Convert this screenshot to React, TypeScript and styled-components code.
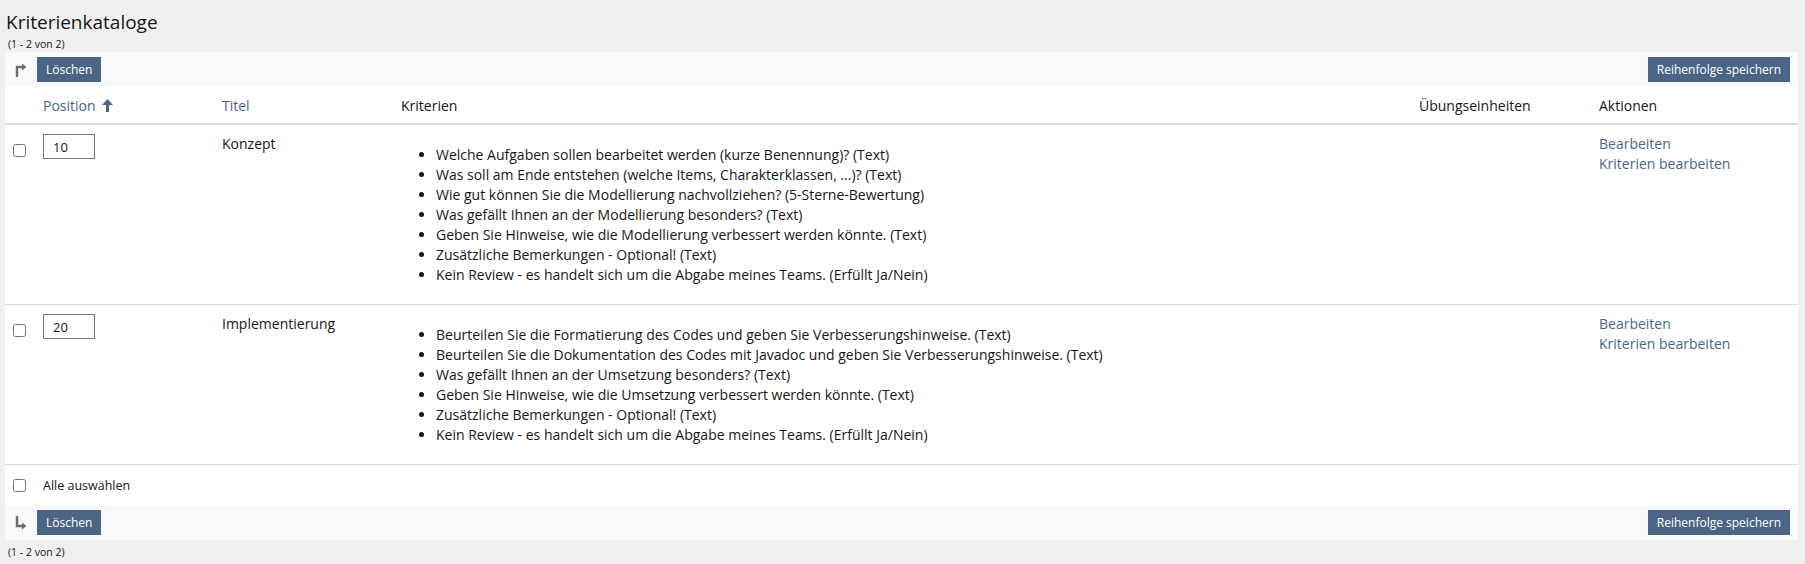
import styled, { createGlobalStyle } from 'styled-components';

const GlobalStyle = createGlobalStyle`
  body {
    margin: 0;
    background: #f0f0f0;
    font-family: "Open Sans", "Noto Sans", sans-serif;
    color: #161616;
  }
`;

const Page = styled.div`
  padding: 0 7px 0 5px;
`;

const Title = styled.h1`
  margin: 10px 0 0 1px;
  font-size: 19px;
  line-height: 24px;
  font-weight: 400;
  color: #161616;
`;

const Count = styled.div`
  font-size: 10.5px;
  line-height: 12px;
  padding: 4px 0 2px 3px;
  color: #161616;
`;

const Toolbar = styled.div`
  height: 35px;
  background: #f9f9f9;
  display: flex;
  align-items: center;
  justify-content: space-between;
  padding: 0 8px 0 9px;
`;

const ToolGroup = styled.div`
  display: flex;
  align-items: center;
  gap: 9px;
`;

const Button = styled.button`
  height: 25px;
  padding: 0 9px;
  border: none;
  background: #4c6586;
  color: #fff;
  font-family: inherit;
  font-size: 12px;
  cursor: pointer;
`;

const Panel = styled.div`
  background: #fff;
`;

const Table = styled.table`
  width: 100%;
  border-collapse: collapse;
  table-layout: fixed;
  font-size: 14px;
`;

const HeadCell = styled.th`
  height: 36px;
  padding: 0 8px;
  text-align: left;
  font-weight: 400;
  vertical-align: middle;
  border-bottom: 2px solid #dddddd;
  color: #161616;
`;

const SortLink = styled.a`
  color: #4c6586;
  text-decoration: none;
  display: inline-flex;
  align-items: center;
  gap: 6px;
`;

const Row = styled.tr`
  border-bottom: 1px solid #dddddd;
`;

const Cell = styled.td`
  padding: 9px 8px;
  vertical-align: top;
  line-height: 20px;
`;

const Check = styled.input.attrs({ type: 'checkbox' })<{ $top?: number }>`
  display: block;
  width: 13px;
  height: 13px;
  margin: ${(p) => p.$top ?? 10}px 0 0 0;
`;

const PosInput = styled.input`
  box-sizing: border-box;
  width: 52px;
  height: 25px;
  border: 1px solid #757575;
  padding: 0 9px;
  font-family: inherit;
  font-size: 13px;
  color: #161616;
  display: block;
`;

const List = styled.ul`
  margin: 11px 0 10px 0;
  padding-left: 35px;
`;

const ActionLink = styled.a`
  display: block;
  color: #4c6586;
  text-decoration: none;
`;

const SelectAll = styled.div`
  height: 40px;
  display: flex;
  align-items: center;
  padding-left: 8px;
  gap: 17px;
  font-size: 12.5px;
`;

const BottomCount = styled(Count)`
  padding: 6px 0 0 3px;
`;

const ArrowIcon = ({ down }: { down?: boolean }) => (
  <svg width="14" height="14" viewBox="0 0 14 14">
    {down ? (
      <>
        <path d="M3 0 V10 H8" stroke="#6f6f6f" strokeWidth="2.4" fill="none" />
        <polygon points="8,6.5 12.5,10 8,13.5" fill="#6f6f6f" />
      </>
    ) : (
      <>
        <path d="M3 14 V4 H8" stroke="#6f6f6f" strokeWidth="2.4" fill="none" />
        <polygon points="8,0.5 12.5,4 8,7.5" fill="#6f6f6f" />
      </>
    )}
  </svg>
);

const SortUp = () => (
  <svg width="11" height="13" viewBox="0 0 11 13">
    <polygon points="5.5,0 11,6 7,6 7,13 4,13 4,6 0,6" fill="#4c6586" />
  </svg>
);

const catalogues = [
  {
    pos: '10',
    title: 'Konzept',
    items: [
      'Welche Aufgaben sollen bearbeitet werden (kurze Benennung)? (Text)',
      'Was soll am Ende entstehen (welche Items, Charakterklassen, ...)? (Text)',
      'Wie gut können Sie die Modellierung nachvollziehen? (5-Sterne-Bewertung)',
      'Was gefällt Ihnen an der Modellierung besonders? (Text)',
      'Geben Sie Hinweise, wie die Modellierung verbessert werden könnte. (Text)',
      'Zusätzliche Bemerkungen - Optional! (Text)',
      'Kein Review - es handelt sich um die Abgabe meines Teams. (Erfüllt Ja/Nein)',
    ],
  },
  {
    pos: '20',
    title: 'Implementierung',
    items: [
      'Beurteilen Sie die Formatierung des Codes und geben Sie Verbesserungshinweise. (Text)',
      'Beurteilen Sie die Dokumentation des Codes mit Javadoc und geben Sie Verbesserungshinweise. (Text)',
      'Was gefällt Ihnen an der Umsetzung besonders? (Text)',
      'Geben Sie Hinweise, wie die Umsetzung verbessert werden könnte. (Text)',
      'Zusätzliche Bemerkungen - Optional! (Text)',
      'Kein Review - es handelt sich um die Abgabe meines Teams. (Erfüllt Ja/Nein)',
    ],
  },
];

const ActionBar = ({ down }: { down?: boolean }) => (
  <Toolbar>
    <ToolGroup>
      <ArrowIcon down={down} />
      <Button>Löschen</Button>
    </ToolGroup>
    <Button>Reihenfolge speichern</Button>
  </Toolbar>
);

export default function App() {
  return (
    <Page>
      <GlobalStyle />
      <Title>Kriterienkataloge</Title>
      <Count>(1 - 2 von 2)</Count>
      <ActionBar />
      <Panel>
        <Table>
          <colgroup>
            <col style={{ width: 30 }} />
            <col style={{ width: 179 }} />
            <col style={{ width: 179 }} />
            <col />
            <col style={{ width: 180 }} />
            <col style={{ width: 207 }} />
          </colgroup>
          <thead>
            <tr>
              <HeadCell />
              <HeadCell>
                <SortLink href="#">
                  Position <SortUp />
                </SortLink>
              </HeadCell>
              <HeadCell>
                <SortLink href="#">Titel</SortLink>
              </HeadCell>
              <HeadCell>Kriterien</HeadCell>
              <HeadCell>Übungseinheiten</HeadCell>
              <HeadCell>Aktionen</HeadCell>
            </tr>
          </thead>
          <tbody>
            {catalogues.map((c) => (
              <Row key={c.pos}>
                <Cell>
                  <Check />
                </Cell>
                <Cell>
                  <PosInput defaultValue={c.pos} />
                </Cell>
                <Cell>{c.title}</Cell>
                <Cell>
                  <List>
                    {c.items.map((item) => (
                      <li key={item}>{item}</li>
                    ))}
                  </List>
                </Cell>
                <Cell />
                <Cell>
                  <ActionLink href="#">Bearbeiten</ActionLink>
                  <ActionLink href="#">Kriterien bearbeiten</ActionLink>
                </Cell>
              </Row>
            ))}
          </tbody>
        </Table>
        <SelectAll>
          <Check $top={0} />
          <span>Alle auswählen</span>
        </SelectAll>
      </Panel>
      <ActionBar down />
      <BottomCount>(1 - 2 von 2)</BottomCount>
    </Page>
  );
}
